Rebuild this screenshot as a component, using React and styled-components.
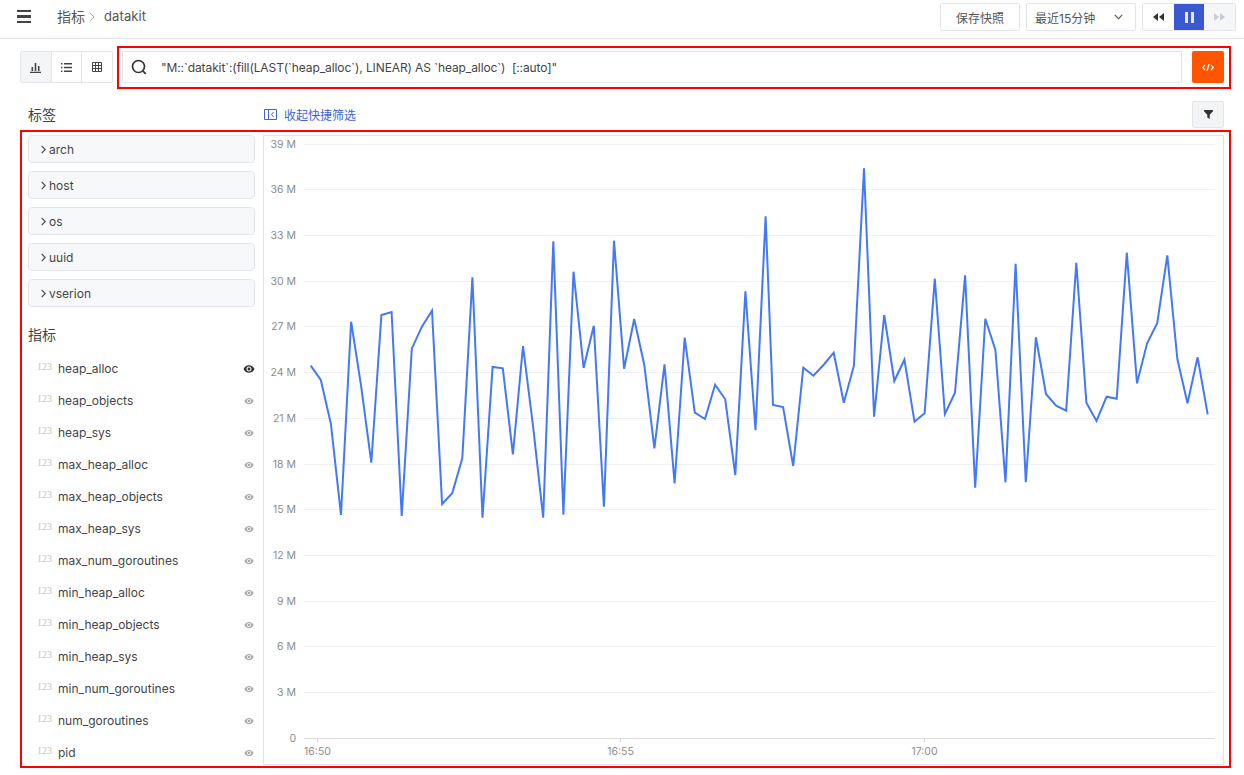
import React from 'react'
import styled, { createGlobalStyle } from 'styled-components'
import { MdRemoveRedEye } from 'react-icons/md'

const series = [
  365.7, 380, 424, 515, 321.7, 386.7, 462.7, 315, 312, 516, 348.7, 326.7, 310.7, 504, 493.3, 458.3,
  277.3, 517.7, 367, 368.3, 454.3, 346, 426.7, 517.7, 241.3, 514.7, 271.7, 368, 325.7, 506.7, 240.7,
  368.7, 319, 365, 448.3, 364.3, 483.3, 337.7, 412.7, 419, 384.7, 399.3, 475, 291.3, 430.3, 216.3,
  405, 407, 466, 367.7, 375.7, 365, 352.7, 402.7, 365.7, 168.3, 416.7, 315, 381, 359.7, 421.7,
  413.3, 278.7, 414, 392.7, 275.3, 487.7, 318.7, 350, 482.3, 263.7, 482.3, 337.3, 394, 405.7, 410.7,
  262.7, 402.7, 421, 396.7, 398.7, 252.7, 383.3, 343.3, 323.3, 255.3, 359.3, 403.3, 357.3, 414.3,
]
const linePoints = series
  .map((y, i) => `${(i <= 45 ? 310.67 + i * 10.11 : 773 + (i - 46) * 10.11).toFixed(1)},${y}`)
  .join(' ')

const tags = ['arch', 'host', 'os', 'uuid', 'vserion']
const metrics = [
  'heap_alloc', 'heap_objects', 'heap_sys', 'max_heap_alloc', 'max_heap_objects', 'max_heap_sys',
  'max_num_goroutines', 'min_heap_alloc', 'min_heap_objects', 'min_heap_sys', 'min_num_goroutines',
  'num_goroutines', 'pid',
]
const yTicks = [39, 36, 33, 30, 27, 24, 21, 18, 15, 12, 9, 6, 3, 0]
const xTicks = [[317.5, '16:50'], [620.5, '16:55'], [924.5, '17:00']]

const GlobalStyle = createGlobalStyle`
  html, body { margin: 0; height: 775px; overflow: hidden; background: #fff; }
  body { font-family: Inter, "Noto Sans CJK SC", sans-serif; color: #444; }
  * { box-sizing: border-box; }
`

const Header = styled.header`
  height: 39px;
  border-bottom: 1px solid #e4e5eb;
  display: flex;
  align-items: flex-start;
  padding: 3px 8px 0 17px;
`
const Burger = styled.div`
  width: 14px;
  height: 13px;
  margin-top: 7px;
  display: flex;
  flex-direction: column;
  justify-content: space-between;
  span { height: 2.4px; background: #444; display: block; }
`
const Crumbs = styled.div`
  margin-left: 26px;
  height: 26px;
  display: flex;
  align-items: center;
  font-size: 14px;
  color: #555;
  flex: 1;
`
const CrumbSep = styled.svg`
  width: 6px;
  height: 10px;
  margin: 1px 9px 0 4px;
`
const CrumbLast = styled.span`
  font-size: 13px;
  letter-spacing: 0.1px;
`
const Button = styled.button`
  height: 28px;
  border: 1px solid #e4e5eb;
  border-radius: 2px;
  background: #fff;
  color: #555;
  font: 12px Inter, "Noto Sans CJK SC", sans-serif;
`
const SaveButton = styled(Button)`
  width: 80px;
  margin-right: 6px;
`
const RangeSelect = styled(Button)`
  width: 110px;
  margin-right: 6px;
  padding: 0 12px 0 8px;
  display: flex;
  align-items: center;
  justify-content: space-between;
`
const IconGroup = styled.div`
  display: flex;
  border: 1px solid #e4e5eb;
  border-radius: 2px;
  overflow: hidden;
`
const TransportGroup = styled(IconGroup)`
  width: 94px;
`
const Transport = styled.div`
  flex: 1;
  height: 26px;
  display: flex;
  align-items: center;
  justify-content: center;
  background: ${p => (p.$active ? '#3a59d1' : p.$off ? '#f5f6f8' : '#fff')};
  color: ${p => (p.$active ? '#e6ebfb' : p.$off ? '#c9ccd4' : '#333')};
`
const Page = styled.div`
  padding-left: 20px;
`
const QueryRow = styled.div`
  display: flex;
  align-items: flex-start;
  margin-top: 7px;
`
const ViewTabs = styled(IconGroup)`
  width: 93px;
  height: 32px;
  margin-top: 5px;
  margin-right: 4px;
`
const ViewTab = styled.div`
  flex: 1;
  display: flex;
  align-items: center;
  justify-content: center;
  color: #444;
  background: ${p => (p.$active ? '#f4f5f7' : '#fff')};
  & + & { border-left: 1px solid #e4e5eb; }
`
const QueryBox = styled.div`
  width: 1114px;
  height: 43px;
  border: 2px solid #f00;
  padding: 3px 5px 0 3px;
  display: flex;
  align-items: flex-start;
`
const QueryInput = styled.div`
  width: 1060px;
  height: 32px;
  border: 1px solid #e4e5eb;
  display: flex;
  align-items: center;
  padding-left: 8px;
  font-size: 12px;
  color: #444;
  white-space: pre;
`
const QueryText = styled.span`
  margin-left: 14px;
  letter-spacing: -0.1px;
`
const RunButton = styled.div`
  width: 32px;
  height: 32px;
  margin-left: 10px;
  background: #ff5500;
  border-radius: 2px;
  display: flex;
  align-items: center;
  justify-content: center;
`
const FilterRow = styled.div`
  display: flex;
  align-items: center;
  height: 27px;
  margin-top: 12px;
  padding-left: 8px;
  width: 1204px;
`
const SectionTitle = styled.div`
  font-size: 14px;
  color: #444;
  margin-top: -2px;
`
const Collapse = styled.div`
  margin-left: 208px;
  display: flex;
  align-items: center;
  gap: 7px;
  font-size: 12px;
  color: #3f62d6;
  flex: 1;
`
const FilterButton = styled.div`
  width: 32px;
  height: 27px;
  background: #f3f4f6;
  border: 1px solid #e4e5eb;
  border-radius: 2px;
  display: flex;
  align-items: center;
  justify-content: center;
`
const Main = styled.div`
  width: 1211px;
  height: 638px;
  margin-top: 2px;
  border: 2px solid #f00;
  display: flex;
  padding: 3px 7px 1px 6px;
`
const Sidebar = styled.aside`
  width: 227px;
  flex: none;
  overflow: hidden;
`
const TagRow = styled.div`
  height: 28px;
  margin-bottom: 8px;
  background: #f7f8fa;
  border: 1px solid #e4e5eb;
  border-radius: 4px;
  display: flex;
  align-items: center;
  padding-left: 12px;
  gap: 3px;
  font-size: 12px;
  color: #444;
`
const MetricsTitle = styled(SectionTitle)`
  margin: 18px 0 7px;
  height: 20px;
  line-height: 20px;
`
const MetricRow = styled.div`
  height: 32px;
  display: flex;
  align-items: center;
  font-size: 12px;
  color: #444;
`
const MetricType = styled.span`
  width: 21px;
  margin-left: 9px;
  margin-top: -3px;
  font: 10px "Liberation Serif", serif;
  color: #c4c4c4;
`
const MetricName = styled.span`
  flex: 1;
`
const Eye = styled(MdRemoveRedEye)`
  color: ${p => (p.$active ? '#333' : '#aaa')};
  font-size: ${p => (p.$active ? '12px' : '10px')};
  margin-right: ${p => (p.$active ? '0' : '1px')};
  margin-top: 1px;
`
const ChartFrame = styled.section`
  width: 961px;
  height: 630px;
  margin-left: 8px;
  border: 1px solid #e2e3e6;
  flex: none;
`
const ChartSvg = styled.svg`
  display: block;
  width: 959px;
  height: 628px;
  text {
    font: 10.5px Inter, sans-serif;
    fill: #8c8c8c;
  }
`

const Chart = () => (
  <ChartSvg viewBox="264 136 959 628">
    {yTicks.map((v, i) => {
      const y = Math.floor(144.1 + i * 45.7) + 0.5
      return (
        <g key={v}>
          <line x1="304" x2="1215" y1={y} y2={y} stroke={v === 0 ? '#dedede' : '#f1f1f3'} />
          <text x="296" y={y + 3.5} textAnchor="end">{v === 0 ? '0' : `${v} M`}</text>
        </g>
      )
    })}
    {xTicks.map(([x, label]) => (
      <g key={label}>
        <line x1={x} x2={x} y1="739" y2="743" stroke="#dedede" />
        <text x={x} y="755" textAnchor="middle">{label}</text>
      </g>
    ))}
    <polyline points={linePoints} fill="none" stroke="#4379f8" strokeWidth="2" strokeLinejoin="miter" />
  </ChartSvg>
)

const Chevron = () => (
  <svg width="5" height="9" viewBox="0 0 5 9"><path d="M.7.8 4.2 4.5.7 8.2" fill="none" stroke="#444" strokeWidth="1.1" /></svg>
)

export default function App() {
  return (
    <>
      <GlobalStyle />
      <Header>
        <Burger><span /><span /><span /></Burger>
        <Crumbs>
          指标
          <CrumbSep viewBox="0 0 6 10"><path d="M.8.8 5 5 .8 9.2" fill="none" stroke="#aaa" /></CrumbSep>
          <CrumbLast>datakit</CrumbLast>
        </Crumbs>
        <SaveButton>保存快照</SaveButton>
        <RangeSelect>
          最近15分钟
          <svg width="9" height="6" viewBox="0 0 9 6"><path d="M.8.8 4.5 4.6 8.2.8" fill="none" stroke="#555" strokeWidth="1.1" /></svg>
        </RangeSelect>
        <TransportGroup>
          <Transport>
            <svg width="11" height="8" viewBox="0 0 11 8" fill="currentColor"><path d="M5 0v8L0 4zM11 0v8L6 4z" /></svg>
          </Transport>
          <Transport $active>
            <svg width="9" height="11" viewBox="0 0 9 11" fill="currentColor"><path d="M0 0h3v11H0zM6 0h3v11H6z" /></svg>
          </Transport>
          <Transport $off>
            <svg width="11" height="8" viewBox="0 0 11 8" fill="currentColor"><path d="M0 0v8l5-4zM6 0v8l5-4z" /></svg>
          </Transport>
        </TransportGroup>
      </Header>
      <Page>
        <QueryRow>
          <ViewTabs>
            <ViewTab $active>
              <svg width="11" height="11" viewBox="0 0 11 11" fill="#444"><path d="M0 9.800h11V11H0zM1.500 5h1.600v4H1.500zM4.700 1h1.600v8H4.700zM7.900 4h1.600v5H7.900z" /></svg>
            </ViewTab>
            <ViewTab>
              <svg width="11" height="9" viewBox="0 0 11 9" fill="#444"><path d="M0 0h1.500v1.500H0zM3 0h8v1.500H3zM0 3.750h1.500v1.500H0zM3 3.750h8v1.500H3zM0 7.500h1.500V9H0zM3 7.500h8V9H3z" /></svg>
            </ViewTab>
            <ViewTab>
              <svg width="10" height="10" viewBox="0 0 10 10" fill="none" stroke="#444"><path d="M.5.5h9v9h-9zM3.500.5v9M6.500.5v9M.5 3.500h9M.5 6.500h9" /></svg>
            </ViewTab>
          </ViewTabs>
          <QueryBox>
            <QueryInput>
              <svg width="16" height="16" viewBox="0 0 16 16" fill="none" stroke="#333" strokeWidth="1.7"><circle cx="7.500" cy="7.500" r="6" /><path d="m11.800 11.800 3 3" /></svg>
              <QueryText>{'"M::`datakit`:(fill(LAST(`heap_alloc`), LINEAR) AS `heap_alloc`)  [::auto]"'}</QueryText>
            </QueryInput>
            <RunButton>
              <svg width="12" height="7" viewBox="0 0 12 7" fill="none" stroke="#fff" strokeWidth="1.300"><path d="M3 .8.800 3.500 3 6.200M9 .8l2.200 2.700L9 6.200M7 .3 5 6.700" /></svg>
            </RunButton>
          </QueryBox>
        </QueryRow>
        <FilterRow>
          <SectionTitle>标签</SectionTitle>
          <Collapse>
            <svg width="13" height="11" viewBox="0 0 13 11" fill="none" stroke="#3f62d6"><path d="M.5.500h12v10H.5zM4.500.500v10M9.500 3 7.500 5.500l2 2.500" /></svg>
            收起快捷筛选
          </Collapse>
          <FilterButton>
            <svg width="9" height="9" viewBox="0 0 9 9" fill="#333"><path d="M0 0h9v1.200L5.700 4.800V9L3.300 7.600V4.800L0 1.200z" /></svg>
          </FilterButton>
        </FilterRow>
        <Main>
          <Sidebar>
            {tags.map(t => (
              <TagRow key={t}><Chevron />{t}</TagRow>
            ))}
            <MetricsTitle>指标</MetricsTitle>
            {metrics.map((m, i) => (
              <MetricRow key={m}>
                <MetricType>123</MetricType>
                <MetricName>{m}</MetricName>
                <Eye $active={i === 0} />
              </MetricRow>
            ))}
          </Sidebar>
          <ChartFrame>
            <Chart />
          </ChartFrame>
        </Main>
      </Page>
    </>
  )
}
